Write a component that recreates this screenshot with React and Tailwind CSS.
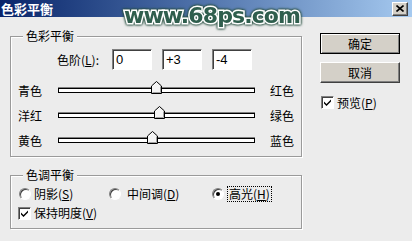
import React from "react";

const U = ({ c }) => <span className="underline underline-offset-[1px]">{c}</span>;

function Radio({ checked }) {
  return (
    <span className="w-[12px] h-[12px] rounded-full bg-white border border-t-[#808080] border-l-[#808080] border-b-white border-r-white shadow-[inset_1px_1px_0_#404040] flex items-center justify-center shrink-0">
      {checked && <span className="w-[4px] h-[4px] rounded-full bg-black" />}
    </span>
  );
}

function Check() {
  return (
    <span className="w-[13px] h-[13px] bg-white border border-t-[#808080] border-l-[#808080] border-b-white border-r-white shadow-[inset_1px_1px_0_#404040] flex items-center justify-center shrink-0">
      <svg width="9" height="9" viewBox="0 0 9 9">
        <path d="M1 3.5 L3.5 6 L8 1.5 L8 3.5 L3.5 8 L1 5.5 Z" fill="#000" />
      </svg>
    </span>
  );
}

function Thumb() {
  return (
    <svg width="11" height="13" viewBox="0 0 11 13">
      <path d="M5.5 0.5 L10.5 5 L10.5 12.5 L0.5 12.5 L0.5 5 Z" fill="#f4f4f4" stroke="#000" strokeWidth="1" />
      <path d="M1.5 5.4 L5.5 1.8" stroke="#fff" strokeWidth="1" />
      <path d="M9.5 5.5 L9.5 11.5 L1.5 11.5" stroke="#a0a0a0" strokeWidth="1" fill="none" />
    </svg>
  );
}

function SliderRow({ left, right, value }) {
  const pos = 98.5 + value * 0.985;
  return (
    <div className="h-[25px] flex items-center pl-[7px]">
      <span className="w-[40px]">{left}</span>
      <div className="w-[197px] h-[5px] relative bg-white border border-black shadow-[0_-1px_0_#808080]">
        <div className="absolute top-[-8px]" style={{ left: `${pos - 6.5}px` }}>
          <Thumb />
        </div>
      </div>
      <span className="ml-[15px]">{right}</span>
    </div>
  );
}

function Input({ v }) {
  return (
    <div className="w-[40px] h-[21px] bg-white border border-t-[#808080] border-l-[#808080] border-b-white border-r-white shadow-[inset_1px_1px_0_#404040] flex items-center pl-[3px] font-['Liberation_Sans',sans-serif] text-[13px]">
      {v}
    </div>
  );
}

export default function App() {
  return (
    <div className="w-[412px] h-[241px] bg-[#ececec] relative overflow-hidden text-[12px] leading-none text-black font-['Noto_Sans_CJK_SC','Noto_Sans',sans-serif]">
      <div className="h-[17px] flex items-center justify-between bg-linear-to-r from-[#0a246a] to-[#a6caf0]">
        <span className="text-white font-bold text-[13px] pl-[1px]">色彩平衡</span>
        <div className="w-[16px] h-[14px] mr-[4px] bg-[#d4d0c8] border border-t-white border-l-white border-b-[#404040] border-r-[#404040] shadow-[inset_-1px_-1px_0_#808080] flex items-center justify-center">
          <svg width="8" height="7" viewBox="0 0 8 7">
            <path d="M0.5 0.5 L7.5 6.5 M7.5 0.5 L0.5 6.5" stroke="#000" strokeWidth="1.6" />
          </svg>
        </div>
      </div>

      <div className="flex items-start">
        <div className="ml-[10px] mt-[19px] w-[292px] flex flex-col">
          <div className="h-[121px] border border-[#9a9a9a] shadow-[inset_1px_1px_0_#fff,1px_1px_0_#fff] relative pt-[12px]">
            <span className="absolute top-[-7px] left-[12px] bg-[#ececec] px-[3px]">色彩平衡</span>
            <div className="flex items-center pl-[46px]">
              <span className="w-[55px]">
                色阶(<U c="L" />):
              </span>
              <div className="flex gap-[10px]">
                <Input v="0" />
                <Input v="+3" />
                <Input v="-4" />
              </div>
            </div>
            <div className="mt-[8px]">
              <SliderRow left="青色" right="红色" value={0} />
              <SliderRow left="洋红" right="绿色" value={3} />
              <SliderRow left="黄色" right="蓝色" value={-4} />
            </div>
          </div>

          <div className="mt-[18px] h-[54px] border border-[#9a9a9a] shadow-[inset_1px_1px_0_#fff,1px_1px_0_#fff] relative pt-[10px]">
            <span className="absolute top-[-7px] left-[12px] bg-[#ececec] px-[3px]">色调平衡</span>
            <div className="h-[16px] flex items-center pl-[8px]">
              <div className="w-[90px] flex items-center gap-[3px]">
                <Radio />
                <span>
                  阴影(<U c="S" />)
                </span>
              </div>
              <div className="w-[103px] flex items-center gap-[3px]">
                <Radio />
                <span className="ml-[3px]">
                  中间调(<U c="D" />)
                </span>
              </div>
              <div className="flex items-center gap-[3px]">
                <Radio checked />
                <span className="ml-[1px] px-[1px] py-[1px] outline outline-1 outline-dotted outline-black">
                  高光(<U c="H" />)
                </span>
              </div>
            </div>
            <div className="h-[16px] mt-[3px] flex items-center pl-[7px] gap-[3px]">
              <Check />
              <span>
                保持明度(<U c="V" />)
              </span>
            </div>
          </div>
        </div>

        <div className="ml-[18px] mt-[16px] flex flex-col">
          <button className="w-[80px] h-[21px] bg-[#d4d0c8] border border-black shadow-[inset_1px_1px_0_#fff,inset_-1px_-1px_0_#808080] flex items-center justify-center">
            确定
          </button>
          <button className="mt-[8px] w-[80px] h-[21px] bg-[#d4d0c8] border border-t-white border-l-white border-b-[#404040] border-r-[#404040] shadow-[inset_-1px_-1px_0_#808080] flex items-center justify-center">
            取消
          </button>
          <div className="mt-[13px] ml-[1px] flex items-center gap-[3px]">
            <Check />
            <span>
              预览(<U c="P" />)
            </span>
          </div>
        </div>
      </div>

      <div className="absolute left-[124px] top-[5px] font-['DejaVu_Sans',sans-serif] font-bold text-[22px] tracking-[-0.9px] text-[#2f5e4d] [paint-order:stroke_fill] [-webkit-text-stroke:3px_#ffffff] [filter:drop-shadow(0_0_1px_#244c3d)_drop-shadow(0_0_1px_#244c3d)]">
        www.68ps.com
      </div>
    </div>
  );
}
